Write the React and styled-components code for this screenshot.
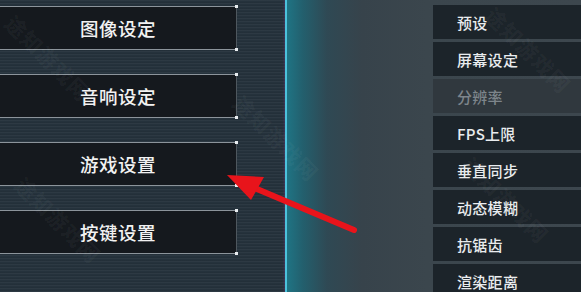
import React from 'react';
import styled, { createGlobalStyle } from 'styled-components';

const Global = createGlobalStyle`
  html, body {
    margin: 0;
    padding: 0;
    background: #25303a;
  }
  body {
    font-family: "Noto Sans CJK SC", "Noto Sans", sans-serif;
  }
`;

const Screen = styled.div`
  position: relative;
  width: 581px;
  height: 292px;
  overflow: hidden;
  display: flex;
`;

const LeftPanel = styled.div`
  width: 285px;
  flex-shrink: 0;
  display: flex;
  flex-direction: column;
  gap: 24px;
  padding-top: 6px;
  box-sizing: border-box;
  background-color: #25323c;
  background-image: repeating-linear-gradient(
    0deg,
    rgba(255, 255, 255, 0.035) 0 1px,
    rgba(0, 0, 0, 0.05) 1px 2px,
    transparent 2px 3px
  );
`;

const MenuButton = styled.div`
  position: relative;
  width: 237px;
  height: 44px;
  box-sizing: border-box;
  background: #15191e;
  border-top: 1px solid #8c949b;
  border-bottom: 1px solid #8c949b;
  border-right: 1px solid #4e575e;
  display: flex;
  align-items: center;
  justify-content: center;
  color: #f2f2f2;
  font-size: 18.5px;
  font-weight: 500;
  letter-spacing: 0.5px;

  &::before,
  &::after {
    content: '';
    position: absolute;
    right: -2px;
    width: 3px;
    height: 3px;
    background: #e8ecef;
  }
  &::before {
    top: -2px;
  }
  &::after {
    bottom: -2px;
  }
`;

const Divider = styled.div`
  width: 1.5px;
  flex-shrink: 0;
  background: #4cc2dc;
  box-shadow: -1px 0 2px rgba(120, 60, 140, 0.4);
`;

const RightArea = styled.div`
  flex: 1;
  display: flex;
  justify-content: flex-end;
  background: linear-gradient(
    90deg,
    #1f7484 0px,
    #235f6d 16px,
    #2f4954 40px,
    #37434b 75px,
    #3b464d 140px,
    #3d474e 100%
  );
`;

const Options = styled.div`
  width: 148px;
  display: flex;
  flex-direction: column;
  gap: 3px;
  padding-top: 5px;
`;

const Option = styled.div`
  height: 34px;
  flex-shrink: 0;
  display: flex;
  align-items: center;
  padding-left: 24px;
  background: ${({ $header }) => ($header ? '#30383e' : '#1c242a')};
  color: ${({ $header }) => ($header ? '#7d858b' : '#e9ecee')};
  font-size: 15px;
  font-weight: 500;
  letter-spacing: 0.3px;
`;

const Watermarks = styled.div`
  position: absolute;
  inset: 0;
  pointer-events: none;
`;

const Mark = styled.span`
  position: absolute;
  left: ${({ $x }) => $x}px;
  top: ${({ $y }) => $y}px;
  transform: rotate(45deg);
  transform-origin: left top;
  color: rgba(255, 255, 255, 0.055);
  font-size: 21px;
  font-weight: 700;
  white-space: nowrap;
  letter-spacing: 1px;
`;

const ArrowLayer = styled.svg`
  position: absolute;
  left: 0;
  top: 0;
  pointer-events: none;
`;

const buttons = ['图像设定', '音响设定', '游戏设置', '按键设置'];

const options = [
  { label: '预设' },
  { label: '屏幕设定' },
  { label: '分辨率', header: true },
  { label: 'FPS上限' },
  { label: '垂直同步' },
  { label: '动态模糊' },
  { label: '抗锯齿' },
  { label: '渲染距离' },
];

const marks = [
  { x: 20, y: 8 },
  { x: 248, y: 88 },
  { x: 30, y: 170 },
  { x: 500, y: 0 },
  { x: 478, y: 150 },
];

export default function App() {
  return (
    <Screen>
      <Global />
      <LeftPanel>
        {buttons.map((b) => (
          <MenuButton key={b}>{b}</MenuButton>
        ))}
      </LeftPanel>
      <Divider />
      <RightArea>
        <Options>
          {options.map((o) => (
            <Option key={o.label} $header={o.header}>
              {o.label}
            </Option>
          ))}
        </Options>
      </RightArea>
      <Watermarks>
        {marks.map((m, i) => (
          <Mark key={i} $x={m.x} $y={m.y}>
            途知游戏网
          </Mark>
        ))}
      </Watermarks>
      <ArrowLayer width="581" height="292" viewBox="0 0 581 292">
        <line x1="354" y1="230" x2="252" y2="187" stroke="#e8141b" strokeWidth="6" strokeLinecap="round" />
        <polygon points="227,175 264,177 251,200" fill="#e8141b" />
      </ArrowLayer>
    </Screen>
  );
}
